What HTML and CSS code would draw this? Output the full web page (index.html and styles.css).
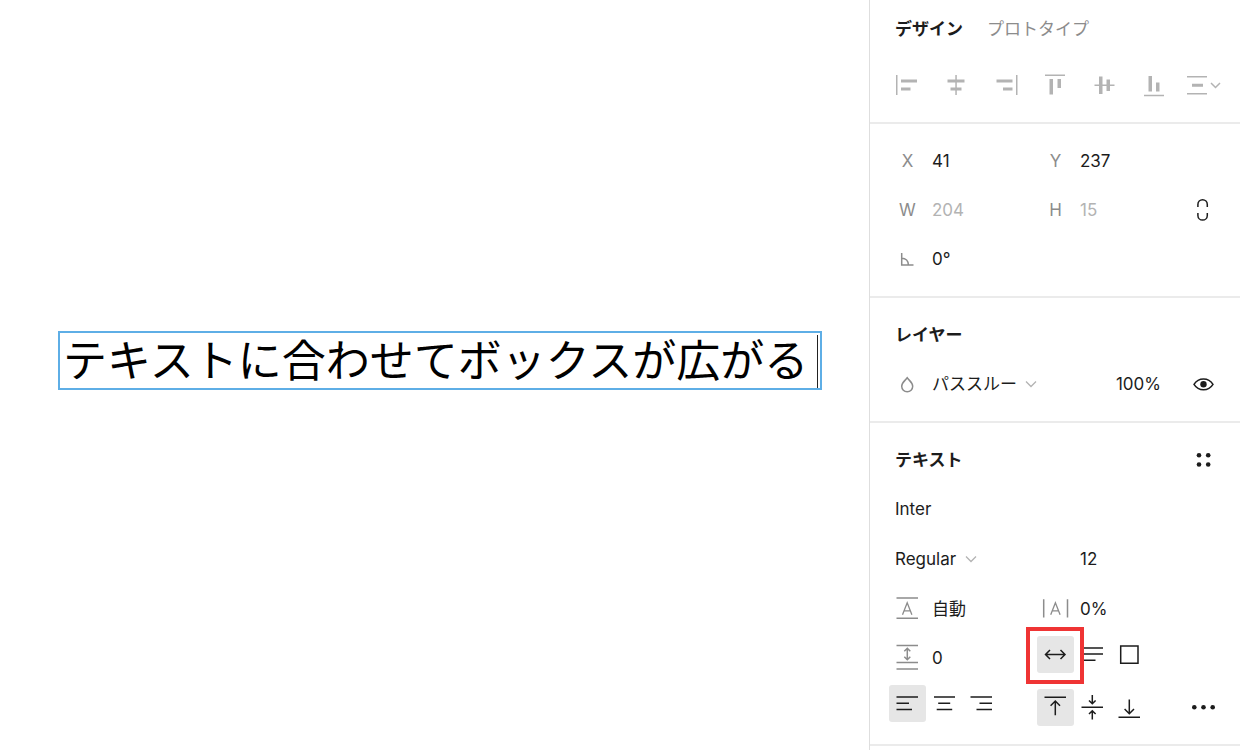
FILE: index.html
```html
<!DOCTYPE html>
<html lang="ja">
<head>
<meta charset="utf-8">
<title>デザイン</title>
<link rel="stylesheet" href="styles.css">
</head>
<body>
<div class="editor">
  <main class="canvas">
    <div class="text-layer"><span class="text-content">テキストに合わせてボックスが広がる</span><span class="caret"></span></div>
  </main>

  <aside class="panel">
    <header class="section header">
      <nav class="tabs">
        <button class="tab active" type="button">デザイン</button>
        <button class="tab" type="button">プロトタイプ</button>
      </nav>
      <div class="toolbar">
        <button class="icon-btn" type="button" aria-label="左揃え"><svg viewBox="0 0 37 37"><path class="fill" d="M7 8h1.500v20H7zM12 12.500h16v3H12zM12 20.500h9.500v3H12z"/></svg></button>
        <button class="icon-btn" type="button" aria-label="水平方向の中央揃え"><svg viewBox="0 0 37 37"><path class="fill" d="M17.300 8h1.500v20h-1.500zM9.500 12.500h17v3h-17zM12.500 20.500h11v3h-11z"/></svg></button>
        <button class="icon-btn" type="button" aria-label="右揃え"><svg viewBox="0 0 37 37"><path class="fill" d="M28 8h1.500v20H28zM8.500 12.500h16v3h-16zM15 20.500h9.500v3H15z"/></svg></button>
        <button class="icon-btn" type="button" aria-label="上揃え"><svg viewBox="0 0 37 37"><path class="fill" d="M8 7.500h20V9H8zM12.500 12h3.500v15.500h-3.500zM20.500 12h3.500v9h-3.500z"/></svg></button>
        <button class="icon-btn" type="button" aria-label="垂直方向の中央揃え"><svg viewBox="0 0 37 37"><path class="fill" d="M8.500 17.500h20V19h-20zM13 9.500h3.500V27H13zM20.500 12.500H24V24h-3.500z"/></svg></button>
        <button class="icon-btn" type="button" aria-label="下揃え"><svg viewBox="0 0 37 37"><path class="fill" d="M8 27.700h20v1.500H8zM12.500 9H16v15.500h-3.500zM20 15.500h3.500v9H20z"/></svg></button>
        <button class="icon-btn" type="button" aria-label="整列"><svg viewBox="0 0 37 37"><path class="fill" d="M2 9h20v1.500H2zM7 16.700h11v3H7zM2 26h20v1.500H2z"/><path class="line" d="m26 16 4.500 4.500L35 16"/></svg></button>
      </div>
    </header>

    <section class="section">
      <div class="row">
        <label class="field"><span class="key">X</span><input class="value" value="41"></label>
        <label class="field"><span class="key">Y</span><input class="value" value="237"></label>
      </div>
      <div class="row">
        <label class="field"><span class="key">W</span><input class="value muted" value="204"></label>
        <label class="field"><span class="key">H</span><input class="value muted" value="15"></label>
        <button class="icon-btn dark" type="button" aria-label="縦横比を固定"><svg viewBox="0 0 37 37"><path class="line" d="M12.900 15.900v-2.500a4.700 4.700 0 0 1 9.400 0v2.500M12.900 21.900v2.500a4.700 4.700 0 0 0 9.400 0v-2.500"/></svg></button>
      </div>
      <div class="row tall">
        <label class="field"><span class="key"><svg viewBox="0 0 37 37" role="img" aria-label="回転"><path class="line" d="M12.700 12v12h11.800M12.700 17.200c4 0 6.700 2.800 6.700 6.800"/></svg></span><input class="value" value="0°"></label>
      </div>
    </section>

    <section class="section">
      <div class="row"><h2 class="title">レイヤー</h2></div>
      <div class="row tall">
        <label class="field"><span class="key"><svg viewBox="0 0 37 37" role="img" aria-label="ブレンドモード"><path class="line" d="M18.200 11.800c1.800 2.600 5.500 4.600 5.500 8.500a5.500 5.500 0 0 1-11 0c0-3.900 3.700-5.900 5.500-8.500z"/></svg></span><select class="select"><option>パススルー</option></select><svg class="chevron" viewBox="0 0 12 12"><path d="m1 3.500 5 5 5-5"/></svg></label>
        <input class="value opacity" aria-label="不透明度" value="100%">
        <button class="icon-btn dark" type="button" aria-label="表示"><svg viewBox="0 0 37 37"><path class="line" d="M9 18.300c2.200-3.500 5.500-5.400 9.500-5.400s7.300 1.900 9.500 5.400c-2.200 3.500-5.500 5.400-9.500 5.400S11.200 21.800 9 18.300z"/><circle class="fill" cx="18.500" cy="18.300" r="3.200"/></svg></button>
      </div>
    </section>

    <section class="section text-section">
      <div class="row">
        <h2 class="title">テキスト</h2>
        <button class="icon-btn dark last" type="button" aria-label="スタイル"><svg viewBox="0 0 37 37"><g class="fill"><circle cx="14" cy="14.300" r="2.300"/><circle cx="23.200" cy="14.300" r="2.300"/><circle cx="14" cy="23.500" r="2.300"/><circle cx="23.200" cy="23.500" r="2.300"/></g></svg></button>
      </div>
      <div class="row tall"><input class="value font-name" aria-label="フォント" value="Inter"></div>
      <div class="row tall">
        <label class="field weight"><select class="select" aria-label="太さ"><option>Regular</option></select><svg class="chevron" viewBox="0 0 12 12"><path d="m1 3.500 5 5 5-5"/></svg></label>
        <label class="field"><span class="key"></span><input class="value" aria-label="サイズ" value="12"></label>
      </div>
      <div class="row">
        <label class="field"><span class="key"><svg viewBox="0 0 37 37" role="img" aria-label="行間"><path class="line" d="M7.500 8h21.500M7.500 28.300h21.500"/><path class="line thin" d="m13.500 24.800 4.700-12 4.700 12M15.200 20.800h6"/></svg></span><input class="value" value="自動"></label>
        <label class="field"><span class="key"><svg viewBox="0 0 37 37" role="img" aria-label="文字間隔"><path class="line" d="M6.700 9.200v18.300M30.500 9.200v18.300"/><path class="line thin" d="m13.700 24.800 4.700-12 4.700 12M15.400 20.800h6"/></svg></span><input class="value" value="0%"></label>
      </div>
      <div class="align-area">
        <div class="align-left">
          <label class="field paragraph"><span class="key"><svg viewBox="0 0 37 37" role="img" aria-label="段落間隔"><path class="line" d="M7.500 6.500h21.500M7.500 23.500h21.500M7.500 30h21.500M18.300 9.500v11M15.300 12.300l3-3 3 3M15.300 17.800l3 3 3-3"/></svg></span><input class="value" value="0"></label>
          <div class="group">
            <button class="icon-btn dark selected" type="button" aria-label="テキスト左揃え"><svg viewBox="0 0 37 37"><path class="line" d="M7.500 12h21.500M7.500 18.200h12.500M7.500 24.400h15.500"/></svg></button>
            <button class="icon-btn dark" type="button" aria-label="テキスト中央揃え"><svg viewBox="0 0 37 37"><path class="line" d="M8 12h21M12.200 18.200h12M10.700 24.400h15.500"/></svg></button>
            <button class="icon-btn dark" type="button" aria-label="テキスト右揃え"><svg viewBox="0 0 37 37"><path class="line" d="M7.500 12H29M16.500 18.200H29M13.500 24.400H29"/></svg></button>
          </div>
        </div>
        <div class="align-right">
          <div class="group">
            <button class="icon-btn dark selected highlighted" type="button" aria-label="幅の自動調整"><svg viewBox="0 0 37 37"><path class="line" d="M8.500 18.500h19.500M13 14l-4.500 4.500L13 23M23.500 14l4.500 4.500-4.500 4.500"/></svg></button>
            <button class="icon-btn dark" type="button" aria-label="高さの自動調整"><svg viewBox="0 0 37 37"><path class="line" d="M8 12h21M8 18h21M8 24.200h13.500"/></svg></button>
            <button class="icon-btn dark" type="button" aria-label="固定サイズ"><svg viewBox="0 0 37 37"><path class="line" d="M9.700 9.900h17.300v17.300H9.700z"/></svg></button>
          </div>
          <div class="group">
            <button class="icon-btn dark selected" type="button" aria-label="上に配置"><svg viewBox="0 0 37 37"><path class="line" d="M7.500 8.200h21.500M18.300 26.300V12M13.600 16.700l4.700-4.700 4.700 4.700"/></svg></button>
            <button class="icon-btn dark" type="button" aria-label="中央に配置"><svg viewBox="0 0 37 37"><path class="line" d="M7.500 18.200h21.500M18.300 6v8.500M15 11.500l3.300 3.300 3.300-3.300M18.300 30.500V22M15 25l3.300-3.300 3.300 3.300"/></svg></button>
            <button class="icon-btn dark" type="button" aria-label="下に配置"><svg viewBox="0 0 37 37"><path class="line" d="M7.500 28.300h21.500M18.300 10.500V24.500M13.600 20l4.700 4.700 4.700-4.700"/></svg></button>
            <button class="icon-btn dark last" type="button" aria-label="その他"><svg viewBox="0 0 37 37"><g class="fill"><circle cx="9.300" cy="18.300" r="2.300"/><circle cx="18.500" cy="18.300" r="2.300"/><circle cx="27.700" cy="18.300" r="2.300"/></g></svg></button>
          </div>
        </div>
      </div>
    </section>
  </aside>
</div>
</body>
</html>
```

FILE: styles.css
```css
* {
  box-sizing: border-box;
}

body {
  margin: 0;
  background: #fff;
  color: #1c1c1c;
  font: 17px/24px Inter, "Noto Sans CJK JP", sans-serif;
}

button,
input,
select {
  margin: 0;
  padding: 0;
  border: 0;
  background: none;
  color: inherit;
  font: inherit;
}

svg {
  display: block;
}

.editor {
  display: flex;
  min-height: 100vh;
  overflow: hidden;
}

.canvas {
  flex: 1;
  min-width: 0;
  padding: 331px 47px 0 58px;
}

.text-layer {
  display: flex;
  justify-content: space-between;
  border: 2px solid #5eaee6;
  padding: 2px 2px 0;
  color: #000;
  font-size: 44px;
  line-height: 53px;
  white-space: nowrap;
}

.text-content {
  padding-left: 1px;
}

.caret {
  width: 1px;
  background: #222;
}

.panel {
  flex: none;
  width: 371px;
  border-left: 1px solid #dedede;
}

.section {
  padding: 12px 18px 12px 19px;
  border-bottom: 2px solid #ebebeb;
}

.header {
  padding-top: 0;
  padding-bottom: 18px;
}

.tabs {
  display: flex;
  gap: 24px;
  height: 58px;
  padding-left: 6px;
}

.tab {
  color: #8c8c8c;
}

.tab.active {
  color: #1c1c1c;
  font-weight: 700;
}

.toolbar {
  display: flex;
  justify-content: space-between;
  padding-top: 9px;
}

.icon-btn {
  position: relative;
  flex: none;
  width: 37px;
  height: 37px;
  border-radius: 3px;
  color: #b3b3b3;
}

.icon-btn.dark {
  color: #1c1c1c;
}

.icon-btn.selected {
  background: #e6e6e6;
}

.icon-btn svg,
.key svg {
  width: 37px;
  height: 37px;
}

.fill {
  fill: currentColor;
}

.line {
  fill: none;
  stroke: currentColor;
  stroke-width: 1.5;
}

.thin {
  stroke-width: 1.3;
}

.row {
  display: grid;
  grid-template-columns: 148px 148px 37px;
  align-items: center;
  height: 49px;
}

.row.tall {
  height: 50px;
}

.title {
  margin: 0;
  padding-left: 6px;
  font-size: 17px;
  font-weight: 700;
}

.field {
  display: flex;
  align-items: center;
  white-space: nowrap;
}

.key {
  flex: none;
  width: 37px;
  margin-right: 6px;
  color: #8c8c8c;
  text-align: center;
}

.value {
  width: 72px;
  height: 24px;
}

.muted {
  color: #b3b3b3;
}

.opacity {
  width: 124px;
  text-align: right;
}

.font-name,
.weight {
  padding-left: 6px;
}

.select {
  appearance: none;
}

.chevron {
  flex: none;
  width: 12px;
  height: 12px;
  margin-left: 8px;
  fill: none;
  stroke: #b3b3b3;
  stroke-width: 1.3;
}

.last {
  grid-column: 3;
}

.text-section {
  padding-bottom: 18px;
}

.align-area {
  display: grid;
  grid-template-columns: 148px 1fr;
}

.paragraph {
  height: 49px;
  margin-bottom: 3px;
}

.align-right {
  display: grid;
  gap: 16px;
  padding-top: 3px;
}

.group {
  display: flex;
}

.group .last {
  margin-left: auto;
}

.highlighted {
  z-index: 1;
}

.highlighted::after {
  content: "";
  position: absolute;
  inset: -9px -10px -11px -11px;
  border: 4px solid #ef3434;
}
```
